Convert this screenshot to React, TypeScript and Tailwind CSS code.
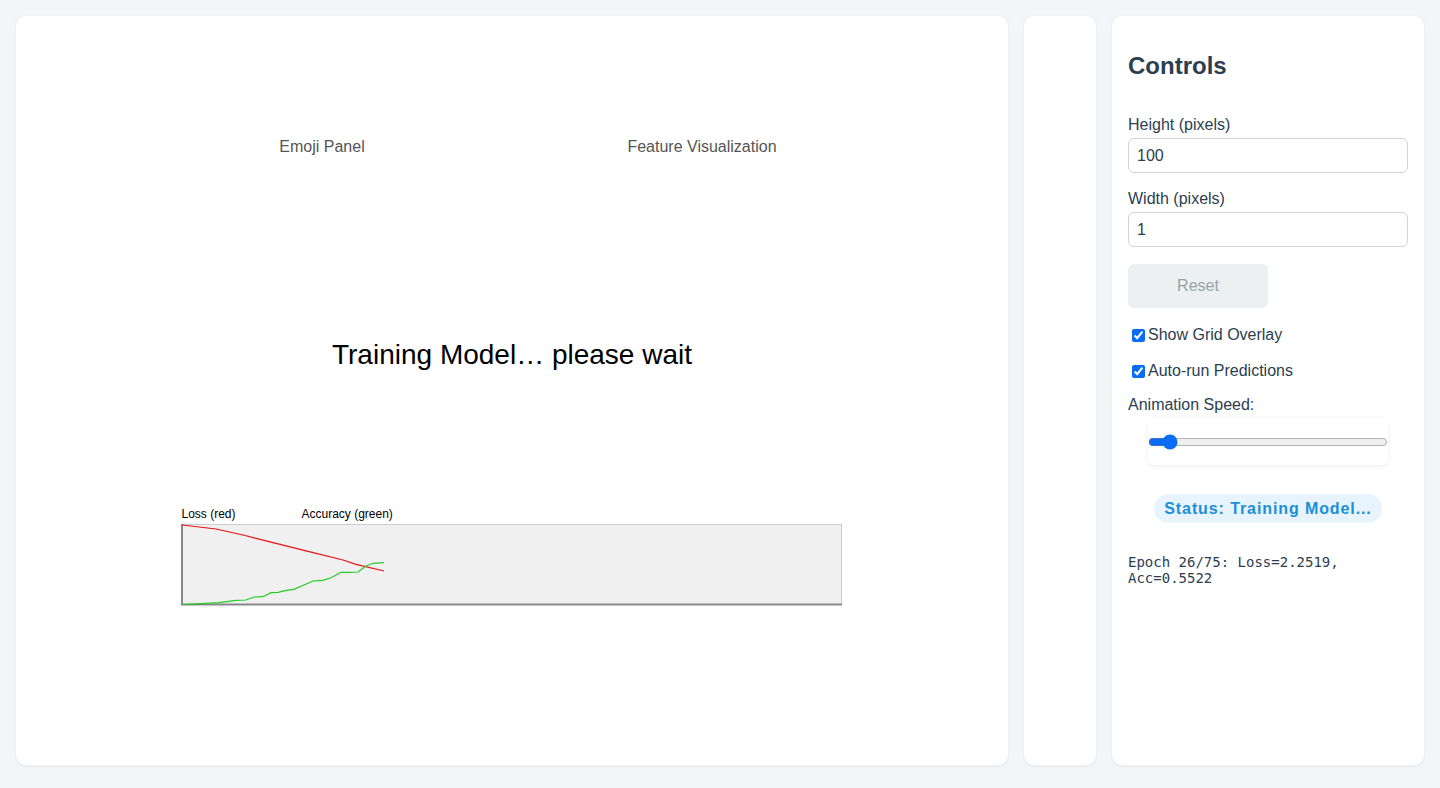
import React from "react";

const lossPts: [number, number][] = [
  [0, 1], [34, 5], [61, 11], [94, 19.3], [127, 27.7], [161, 36], [174, 40.3], [202, 47],
];

const accPts: [number, number][] = [
  [1, 80.5], [37, 78.7], [54, 76.3], [64, 76], [72, 73], [81, 72.7], [89, 68.7], [96, 68.3],
  [104, 66.3], [112, 65.3], [126, 59.3], [131, 57], [141, 56.3], [149, 53.7], [159, 48.3],
  [167, 48.3], [176, 48], [184, 42], [191, 39.3], [202, 38.7],
];

function toPoints(pts: [number, number][]) {
  return pts.map(([x, y]) => `${x + 1},${y}`).join(" ");
}

function TrainingChart() {
  return (
    <div className="flex flex-col">
      <div className="flex h-[14px] text-[12px] leading-[14px] text-black pl-px">
        <span className="w-[120px]">Loss (red)</span>
        <span>Accuracy (green)</span>
      </div>
      <svg className="mt-[3px] block" width="661" height="82" viewBox="0 0 661 82">
        <rect x="0.5" y="0.5" width="660" height="80" fill="#f0f0f0" stroke="#cccccc" />
        <line x1="1" y1="0" x2="1" y2="81" stroke="#888888" strokeWidth="2" />
        <line x1="0" y1="80.5" x2="661" y2="80.5" stroke="#888888" strokeWidth="2" />
        <polyline points={toPoints(lossPts)} fill="none" stroke="#ee1111" strokeWidth="1.2" />
        <polyline points={toPoints(accPts)} fill="none" stroke="#22cc22" strokeWidth="1.2" />
      </svg>
    </div>
  );
}

function Checkbox({ label }: { label: string }) {
  return (
    <label className="flex items-center h-5 text-base text-[#2c3e50]">
      <input
        type="checkbox"
        defaultChecked
        className="m-0 ml-1 mr-[3px] w-[13px] h-[13px] accent-[#0a6cf5]"
      />
      {label}
    </label>
  );
}

export default function App() {
  return (
    <div
      className="h-[788px] w-[1440px] bg-[#f4f5f9] flex gap-4 px-4 pt-4 overflow-hidden"
      style={{ fontFamily: '"Liberation Sans", Arial, sans-serif' }}
    >
      {/* main canvas area */}
      <div className="w-[992px] h-[749px] bg-white rounded-[10px] shadow-[0_1px_4px_rgba(0,0,0,0.06)] flex flex-col items-center pt-[122px]">
        <div className="flex gap-[40px] text-base leading-[18px] text-[#555555]">
          <div className="w-[340px] text-center">Emoji Panel</div>
          <div className="w-[340px] text-center">Feature Visualization</div>
        </div>
        <div className="mt-[183px] text-[28px] leading-[32px] text-black">
          Training Model… please wait
        </div>
        <div className="mt-[136px] -ml-[2px]">
          <TrainingChart />
        </div>
      </div>

      {/* narrow spacer panel */}
      <div className="w-[72px] h-[749px] bg-white rounded-[10px] shadow-[0_1px_4px_rgba(0,0,0,0.06)]" />

      {/* controls */}
      <div className="w-[312px] h-[749px] bg-white rounded-[10px] shadow-[0_1px_4px_rgba(0,0,0,0.06)] px-4 pt-[36px]">
        <h2 className="text-2xl leading-[28px] font-bold text-[#2c3e50]">Controls</h2>

        <div className="mt-9 text-base leading-[18px] text-[#2c3e50]">Height (pixels)</div>
        <input
          type="text"
          defaultValue="100"
          className="mt-1 block w-[280px] h-[35px] border border-[#cfd4d8] rounded-[6px] px-2 text-base text-[#2c3e50] outline-none"
        />

        <div className="mt-[17px] text-base leading-[18px] text-[#2c3e50]">Width (pixels)</div>
        <input
          type="text"
          defaultValue="1"
          className="mt-1 block w-[280px] h-[35px] border border-[#cfd4d8] rounded-[6px] px-2 text-base text-[#2c3e50] outline-none"
        />

        <button className="mt-[17px] block w-[140px] h-[44px] rounded-[6px] bg-[#ecf0f1] text-base text-[#95a5a6]">
          Reset
        </button>

        <div className="mt-[17px]">
          <Checkbox label="Show Grid Overlay" />
        </div>
        <div className="mt-4">
          <Checkbox label="Auto-run Predictions" />
        </div>

        <div className="mt-[15px] text-base leading-[18px] text-[#2c3e50]">Animation Speed:</div>
        <div className="mt-1 mx-auto w-[240px] h-[47px] bg-white rounded-[6px] shadow-[0_1px_5px_rgba(0,0,0,0.08)] flex items-center">
          <input
            type="range"
            min={1}
            max={17}
            defaultValue={2}
            className="w-[240px] m-0 accent-[#0a6cf5]"
          />
        </div>

        <div className="mt-[29px] flex justify-center">
          <div className="h-[29px] px-[10px] rounded-full bg-[#e8f4fd] text-[#1a8fd8] text-base font-bold tracking-[0.9px] flex items-center">
            Status: Training Model...
          </div>
        </div>

        <div
          className="mt-[31px] text-[14px] leading-[16px] text-[#2c3e50]"
          style={{ fontFamily: '"DejaVu Sans Mono", "Liberation Mono", monospace' }}
        >
          Epoch 26/75: Loss=2.2519,
          <br />
          Acc=0.5522
        </div>
      </div>
    </div>
  );
}
